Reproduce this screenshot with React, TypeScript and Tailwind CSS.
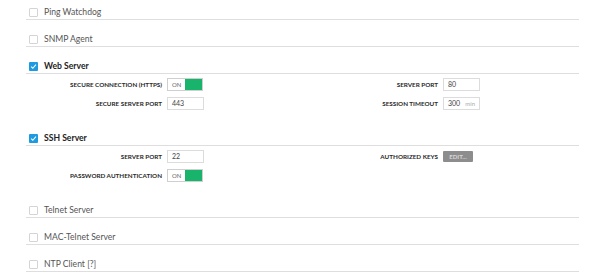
import React from "react";

function Checkbox({ checked }: { checked?: boolean }) {
  if (checked) {
    return (
      <span className="flex h-[9px] w-[9px] items-center justify-center rounded-[1px] bg-[#1e9ae0]">
        <svg width="7" height="7" viewBox="0 0 8 8">
          <path d="M1.3 4.2 L3.2 6 L6.8 1.8" fill="none" stroke="#fff" strokeWidth="1.2" />
        </svg>
      </span>
    );
  }
  return <span className="block h-[9px] w-[9px] rounded-[1px] border border-[#d4d4d4] bg-white" />;
}

function Header({ label, checked, first }: { label: string; checked?: boolean; first?: boolean }) {
  return (
    <div
      className={`flex items-end border-b border-[#dedede] pb-[1px] pl-[3px] ${first ? "h-[20px]" : "h-[27px]"}`}
    >
      <div className="flex items-center gap-[6px]">
        <Checkbox checked={checked} />
        <span
          className={`text-[8.6px] leading-[11px] ${checked ? "font-bold text-[#222]" : "text-[#555]"}`}
        >
          {label}
        </span>
      </div>
    </div>
  );
}

function Label({ children }: { children: React.ReactNode }) {
  return (
    <div className="w-[136px] text-right text-[6.3px] font-bold uppercase leading-[13px] text-[#2a2a2a]">
      {children}
    </div>
  );
}

function Toggle() {
  return (
    <div className="flex h-[13px] w-[36px] border border-[#cfcfcf] bg-white">
      <div className="flex w-[17px] items-center pl-[4px] text-[6px] text-[#666]">ON</div>
      <div className="flex-1 bg-[#19b46b]" />
    </div>
  );
}

function Input({ value, suffix }: { value: string; suffix?: string }) {
  return (
    <div className="flex h-[13px] w-[37px] items-center justify-between border border-[#dcdcdc] bg-white px-[4px] text-[7px] text-[#444]">
      <span>{value}</span>
      {suffix ? <span className="text-[6px] text-[#aaa]">{suffix}</span> : null}
    </div>
  );
}

function Field({ label, children }: { label: string; children: React.ReactNode }) {
  return (
    <div className="flex w-[276px] items-center gap-[5px]">
      <Label>{label}</Label>
      {children}
    </div>
  );
}

function Row({ children }: { children: React.ReactNode }) {
  return <div className="flex h-[13px] items-center">{children}</div>;
}

export default function App() {
  return (
    <div
      className="h-[280px] w-[602px] overflow-hidden bg-white"
      style={{ fontFamily: "Lato, 'Open Sans', sans-serif" }}
    >
      <div className="ml-[26px] w-[553px]">
        <Header label="Ping Watchdog" first />
        <Header label="SNMP Agent" />
        <Header label="Web Server" checked />
        <div className="flex flex-col gap-[6px] pb-[9px] pt-[4px]">
          <Row>
            <Field label="Secure Connection (HTTPS)">
              <Toggle />
            </Field>
            <Field label="Server Port">
              <Input value="80" />
            </Field>
          </Row>
          <Row>
            <Field label="Secure Server Port">
              <Input value="443" />
            </Field>
            <Field label="Session Timeout">
              <Input value="300" suffix="min" />
            </Field>
          </Row>
        </div>
        <Header label="SSH Server" checked />
        <div className="flex flex-col gap-[6px] pb-[9px] pt-[4px]">
          <Row>
            <Field label="Server Port">
              <Input value="22" />
            </Field>
            <Field label="Authorized Keys">
              <div className="flex h-[11px] w-[30px] items-center justify-center rounded-[1px] bg-[#8d8d8d] text-[6px] font-bold text-[#d8d8d8]">
                EDIT...
              </div>
            </Field>
          </Row>
          <Row>
            <Field label="Password Authentication">
              <Toggle />
            </Field>
          </Row>
        </div>
        <Header label="Telnet Server" />
        <Header label="MAC-Telnet Server" />
        <Header label="NTP Client [?]" />
      </div>
    </div>
  );
}
